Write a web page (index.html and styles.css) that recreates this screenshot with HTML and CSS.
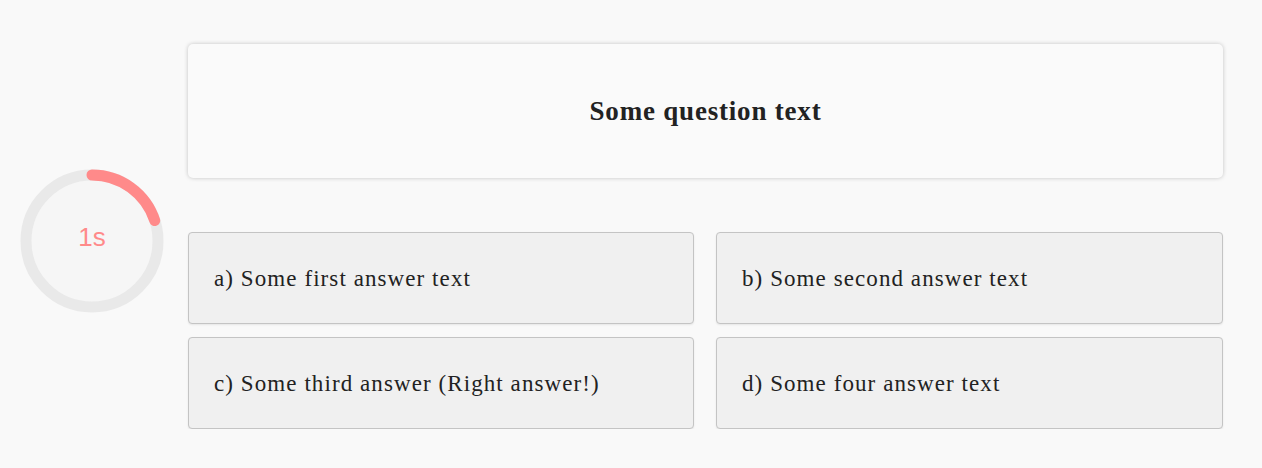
FILE: index.html
```html
<!DOCTYPE html>
<html>
<head>
<meta charset="utf-8">
<link rel="stylesheet" href="styles.css">
</head>
<body>
<div class="page">
  <div class="timer">
    <svg class="ring" width="144" height="144" viewBox="0 0 144 144">
      <circle cx="72" cy="72" r="66" fill="#f6f6f6" stroke="#e9e9e9" stroke-width="11"/>
      <path d="M72 6 A66 66 0 0 1 134.77 51.6" fill="none" stroke="#ff8a8a" stroke-width="11" stroke-linecap="round"/>
    </svg>
    <span class="timer-label">1s</span>
  </div>
  <div class="quiz">
    <div class="question">Some question text</div>
    <div class="answers">
      <div class="answer">a) Some first answer text</div>
      <div class="answer">b) Some second answer text</div>
      <div class="answer">c) Some third answer (Right answer!)</div>
      <div class="answer">d) Some four answer text</div>
    </div>
  </div>
</div>
</body>
</html>
```
FILE: styles.css
```css
html, body {
  margin: 0;
  padding: 0;
  background: #f9f9f9;
}
body {
  font-family: "Liberation Serif", "Times New Roman", serif;
  color: #222;
}
.page {
  display: flex;
  align-items: center;
  gap: 24px;
  padding: 44px 39px 0 20px;
}
.timer {
  position: relative;
  width: 144px;
  height: 144px;
  flex: none;
  margin-top: 8px;
}
.ring {
  display: block;
}
.timer-label {
  position: absolute;
  inset: 0;
  display: flex;
  align-items: center;
  justify-content: center;
  font-family: "Liberation Sans", Arial, sans-serif;
  font-size: 26px;
  color: #ff8a8a;
  padding-bottom: 6px;
}
.quiz {
  flex: 1;
  display: flex;
  flex-direction: column;
}
.question {
  height: 134px;
  box-sizing: border-box;
  background: #fafafa;
  border-radius: 5px;
  box-shadow: 0 0 4px rgba(0,0,0,0.22);
  display: flex;
  align-items: center;
  justify-content: center;
  font-weight: bold;
  font-size: 27px;
  letter-spacing: 0.8px;
  color: #222;
}
.answers {
  margin-top: 54px;
  display: grid;
  grid-template-columns: 506px 1fr;
  column-gap: 22px;
  row-gap: 13px;
}
.answer {
  height: 92px;
  box-sizing: border-box;
  background: #f0f0f0;
  border: 1px solid #c4c4c4;
  border-radius: 4px;
  box-shadow: 0 1px 2px rgba(0,0,0,0.08);
  display: flex;
  align-items: center;
  padding: 2px 0 0 25px;
  font-size: 23px;
  letter-spacing: 1.08px;
  color: #222;
}
```
